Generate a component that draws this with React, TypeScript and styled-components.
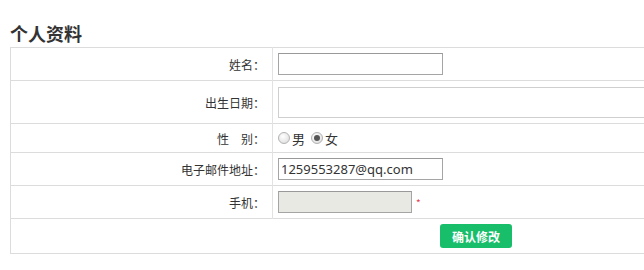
import { FC } from "react";
import styled, { createGlobalStyle } from "styled-components";

const GlobalStyle = createGlobalStyle`
  html, body {
    margin: 0;
    padding: 0;
    background: #fff;
    overflow: hidden;
  }
  body {
    font-family: "Noto Sans CJK SC", "Noto Sans", "Liberation Sans", sans-serif;
    color: #333;
  }
`;

const Page = styled.div`
  padding: 0 0 0 10px;
  overflow: hidden;
`;

const Title = styled.h2`
  margin: 19px 0 0;
  height: 28px;
  font-size: 18px;
  line-height: 28px;
  font-weight: bold;
  color: #333;
`;

const InfoTable = styled.table`
  width: 932px;
  table-layout: fixed;
  border-collapse: collapse;
  border: 1px solid #dcdcdc;
  font-size: 12px;
`;

const Col = styled.col<{ w?: number }>`
  width: ${({ w }) => (w ? `${w}px` : "auto")};
`;

const Row = styled.tr<{ h: number }>`
  height: ${({ h }) => h}px;
  border-bottom: 1px solid #dcdcdc;
`;

const LabelCell = styled.td`
  padding: 0 7px 0 0;
  text-align: right;
  color: #333;
  border-right: 1px solid #e2e2e2;
  white-space: nowrap;
`;

const FieldCell = styled.td`
  padding: 0 0 0 5px;
  vertical-align: middle;
  white-space: nowrap;
`;

const ActionCell = styled.td`
  padding: 5px 0 0;
  text-align: center;
  vertical-align: top;
`;

const TextInput = styled.input<{ w: number; disabledLook?: boolean }>`
  box-sizing: border-box;
  width: ${({ w }) => w}px;
  height: 22px;
  padding: 0 2px;
  border: 1px solid #a5a5a5;
  border-top-color: #999;
  background: ${({ disabledLook }) => (disabledLook ? "#e9e9e4" : "#fff")};
  font-family: "Noto Sans", "Liberation Sans", sans-serif;
  font-size: 13px;
  color: #333;
  vertical-align: middle;
  outline: none;
`;

const WideArea = styled.textarea`
  display: block;
  box-sizing: border-box;
  width: 700px;
  height: 31px;
  border: 1px solid #cfcfcf;
  resize: none;
  outline: none;
`;

const RadioGroup = styled.div`
  display: flex;
  align-items: center;
  gap: 2px;
  font-size: 13px;
  color: #333;
`;

const Radio = styled.input`
  appearance: none;
  box-sizing: border-box;
  width: 12px;
  height: 12px;
  margin: 0 2px 0 0;
  border: 1px solid #b3b3b3;
  border-radius: 50%;
  background: radial-gradient(circle at 40% 35%, #fff 0%, #e4e4e4 70%, #d2d2d2 100%);
  position: relative;

  &:checked::after {
    content: "";
    position: absolute;
    left: 2px;
    top: 2px;
    width: 6px;
    height: 6px;
    border-radius: 50%;
    background: #555;
  }
`;

const RadioLabel = styled.label`
  display: inline-flex;
  align-items: center;
  margin-right: 4px;
`;

const Required = styled.span`
  margin-left: 4px;
  color: #e8394f;
  font-size: 10px;
  vertical-align: middle;
`;

const SubmitButton = styled.button`
  width: 72px;
  height: 24px;
  border: none;
  border-radius: 3px;
  background: #18be6a;
  color: #fff;
  font-family: "Noto Sans CJK SC", sans-serif;
  font-size: 12px;
  font-weight: bold;
  cursor: pointer;
`;

const App: FC = () => {
  return (
    <Page>
      <GlobalStyle />
      <Title>个人资料</Title>
      <InfoTable>
        <colgroup>
          <Col w={262} />
          <Col />
        </colgroup>
        <tbody>
          <Row h={33}>
            <LabelCell>姓名：</LabelCell>
            <FieldCell>
              <TextInput w={165} />
            </FieldCell>
          </Row>
          <Row h={43}>
            <LabelCell>出生日期：</LabelCell>
            <FieldCell>
              <WideArea />
            </FieldCell>
          </Row>
          <Row h={29}>
            <LabelCell>性&emsp;别：</LabelCell>
            <FieldCell>
              <RadioGroup>
                <RadioLabel>
                  <Radio type="radio" name="sex" />男
                </RadioLabel>
                <RadioLabel>
                  <Radio type="radio" name="sex" defaultChecked />女
                </RadioLabel>
              </RadioGroup>
            </FieldCell>
          </Row>
          <Row h={33}>
            <LabelCell>电子邮件地址：</LabelCell>
            <FieldCell>
              <TextInput w={165} defaultValue="1259553287@qq.com" />
            </FieldCell>
          </Row>
          <Row h={33}>
            <LabelCell>手机：</LabelCell>
            <FieldCell>
              <TextInput w={134} disabledLook readOnly />
              <Required>*</Required>
            </FieldCell>
          </Row>
          <Row h={35}>
            <ActionCell colSpan={2}>
              <SubmitButton>确认修改</SubmitButton>
            </ActionCell>
          </Row>
        </tbody>
      </InfoTable>
    </Page>
  );
};

export default App;
